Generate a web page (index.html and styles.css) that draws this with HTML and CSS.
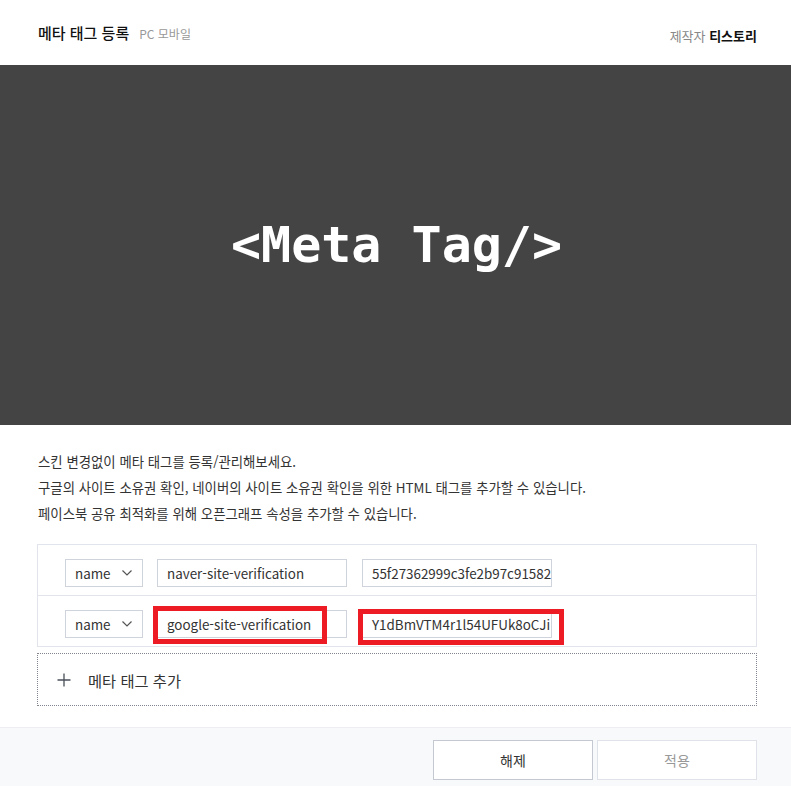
FILE: index.html
```html
<!DOCTYPE html>
<html lang="ko">
<head>
<meta charset="utf-8">
<title>메타 태그 등록</title>
<link rel="stylesheet" href="styles.css">
</head>
<body>
<div class="page">
  <header class="top">
    <div class="title-wrap">
      <h1 class="title">메타 태그 등록</h1>
      <span class="sub">PC 모바일</span>
    </div>
    <div class="maker"><span class="maker-label">제작자</span> <strong class="maker-name">티스토리</strong></div>
  </header>
  <section class="banner">
    <div class="banner-text">&lt;Meta Tag/&gt;</div>
  </section>
  <section class="desc">
    <p>스킨 변경없이 메타 태그를 등록/관리해보세요.</p>
    <p>구글의 사이트 소유권 확인, 네이버의 사이트 소유권 확인을 위한 HTML 태그를 추가할 수 있습니다.</p>
    <p>페이스북 공유 최적화를 위해 오픈그래프 속성을 추가할 수 있습니다.</p>
  </section>
  <div class="tags">
    <div class="tag-row">
      <div class="select"><span>name</span><svg class="chev" width="10" height="6" viewBox="0 0 10 6"><path d="M0.5 0.5 L5 5 L9.5 0.5" fill="none" stroke="#555" stroke-width="1.2"/></svg></div>
      <div class="field"><span>naver-site-verification</span></div>
      <div class="field"><span>55f27362999c3fe2b97c91582</span></div>
    </div>
    <div class="tag-row">
      <div class="select"><span>name</span><svg class="chev" width="10" height="6" viewBox="0 0 10 6"><path d="M0.5 0.5 L5 5 L9.5 0.5" fill="none" stroke="#555" stroke-width="1.2"/></svg></div>
      <div class="field"><span>google-site-verification</span></div>
      <div class="field"><span>Y1dBmVTM4r1l54UFUk8oCJi</span></div>
      <div class="mark mark-a"></div>
      <div class="mark mark-b"></div>
    </div>
  </div>
  <div class="add-row">
    <svg class="plus" width="14" height="14" viewBox="0 0 14 14"><path d="M7 0.5 V13.5 M0.5 7 H13.5" stroke="#4a4f59" stroke-width="1.3"/></svg>
    <span class="add-text">메타 태그 추가</span>
  </div>
  <footer class="bottom">
    <button class="btn btn-cancel">해제</button>
    <button class="btn btn-apply">적용</button>
  </footer>
</div>
</body>
</html>
```
FILE: styles.css
```css
html, body {
  margin: 0;
  padding: 0;
  background: #fff;
}
body {
  font-family: "Noto Sans CJK KR", "Noto Sans", sans-serif;
  color: #333;
}
.page {
  width: 791px;
}
.top {
  height: 65px;
  display: flex;
  align-items: center;
  justify-content: space-between;
  padding: 0 34px 0 38px;
  box-sizing: border-box;
}
.title-wrap {
  display: flex;
  align-items: baseline;
}
.title {
  margin: 0;
  font-size: 15px;
  font-weight: 500;
  color: #111;
}
.sub {
  margin-left: 10px;
  font-size: 12px;
  color: #999;
}
.maker {
  font-size: 13px;
  padding-top: 6px;
}
.maker-label {
  color: #888;
}
.maker-name {
  color: #111;
  font-weight: 700;
}
.banner {
  height: 360px;
  background: #444;
  display: flex;
  align-items: center;
  justify-content: center;
}
.banner-text {
  font-family: "DejaVu Sans Mono", monospace;
  font-weight: 700;
  font-size: 50px;
  color: #fff;
  padding-left: 2px;
}
.desc {
  padding: 23px 38px 0;
}
.desc p {
  margin: 0;
  font-size: 13.4px;
  line-height: 26px;
  color: #333;
}
.tags {
  margin: 18px 34px 0 37px;
  border: 1px solid #e1e4ea;
}
.tag-row {
  position: relative;
  display: flex;
  gap: 14px;
  padding: 14px 0 8px 27px;
}
.tag-row + .tag-row {
  border-top: 1px solid #e1e4ea;
}
.select,
.field {
  height: 28px;
  box-sizing: border-box;
  border: 1px solid #cfd4dc;
  display: flex;
  align-items: center;
  font-size: 13.4px;
  color: #333;
  background: #fff;
}
.select {
  width: 78px;
  padding: 0 10px 0 9px;
  justify-content: space-between;
}
.chev {
  display: block;
}
.field {
  width: 190px;
  padding-left: 9px;
  overflow: hidden;
  white-space: nowrap;
}
.field + .field {
  margin-left: 1px;
}
.mark {
  position: absolute;
  border: 5px solid #ed1c24;
  box-sizing: border-box;
  pointer-events: none;
}
.mark-a {
  left: 115px;
  top: 10px;
  width: 174px;
  height: 38px;
}
.mark-b {
  left: 320px;
  top: 13px;
  width: 206px;
  height: 36px;
}
.add-row {
  margin: 6px 34px 0 37px;
  height: 53px;
  box-sizing: border-box;
  border: 1px dotted #80858f;
  display: flex;
  align-items: center;
  padding-left: 19px;
}
.plus {
  display: block;
}
.add-text {
  margin-left: 17px;
  font-size: 15.3px;
  color: #333;
}
.bottom {
  margin-top: 21px;
  border-top: 1px solid #eceef2;
  background: #f8f9fb;
  display: flex;
  justify-content: flex-end;
  gap: 4px;
  padding: 12px 34px 20px;
}
.btn {
  width: 160px;
  height: 40px;
  font-family: "Noto Sans CJK KR", "Noto Sans", sans-serif;
  font-size: 14px;
  background: #fff;
  cursor: pointer;
}
.btn-cancel {
  border: 1px solid #c4c9d1;
  color: #333;
}
.btn-apply {
  border: 1px solid #dfe2e8;
  color: #999;
}
```
